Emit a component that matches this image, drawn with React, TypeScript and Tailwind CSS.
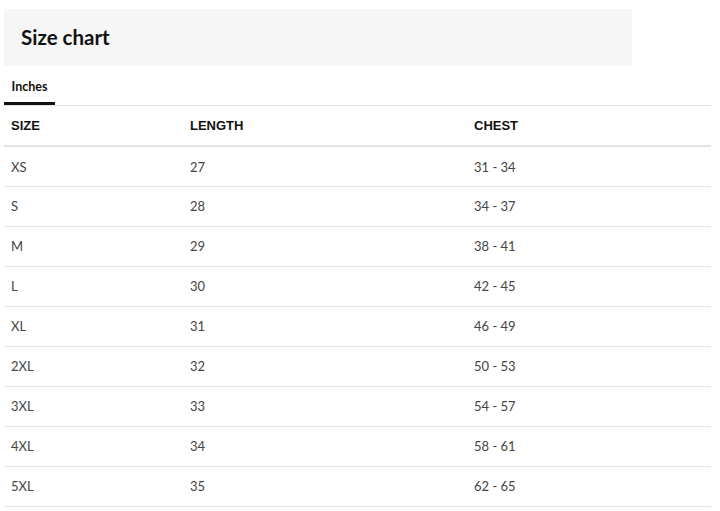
import React from "react";

const rows = [
  ["XS", "27", "31 - 34"],
  ["S", "28", "34 - 37"],
  ["M", "29", "38 - 41"],
  ["L", "30", "42 - 45"],
  ["XL", "31", "46 - 49"],
  ["2XL", "32", "50 - 53"],
  ["3XL", "33", "54 - 57"],
  ["4XL", "34", "58 - 61"],
  ["5XL", "35", "62 - 65"],
];

export default function App() {
  return (
    <div className="w-[720px] bg-white pt-[9px] pl-[4px] font-['Lato',sans-serif]">
      <div className="flex h-[57px] w-[628px] items-center bg-[#f6f6f6] pl-[17px]">
        <h2 className="text-[20.5px] font-bold text-[#111]">Size chart</h2>
      </div>

      <div className="w-[707px] border-b border-[#e3e3e3]">
        <div className="flex h-[39px] w-[51px] items-center justify-center border-b-[3px] border-[#111] pt-[6px]">
          <span className="text-[12.5px] font-bold text-[#111]">Inches</span>
        </div>
      </div>

      <table className="w-[707px] border-collapse text-left">
        <thead>
          <tr className="h-[40px] border-b-2 border-[#e3e3e3]">
            <th className="w-[179px] pl-[7px] font-['Liberation_Sans',sans-serif] text-[13px] font-bold text-[#111]">SIZE</th>
            <th className="w-[284px] pl-[7px] font-['Liberation_Sans',sans-serif] text-[13px] font-bold text-[#111]">LENGTH</th>
            <th className="pl-[7px] font-['Liberation_Sans',sans-serif] text-[13px] font-bold text-[#111]">CHEST</th>
          </tr>
        </thead>
        <tbody>
          {rows.map((r) => (
            <tr key={r[0]} className="h-[40px] border-b border-[#e3e3e3] text-[13px] text-[#444]">
              <td className="pl-[7px] pt-[2px]">{r[0]}</td>
              <td className="pl-[7px] pt-[2px]">{r[1]}</td>
              <td className="pl-[7px] pt-[2px]">{r[2]}</td>
            </tr>
          ))}
        </tbody>
      </table>
    </div>
  );
}
